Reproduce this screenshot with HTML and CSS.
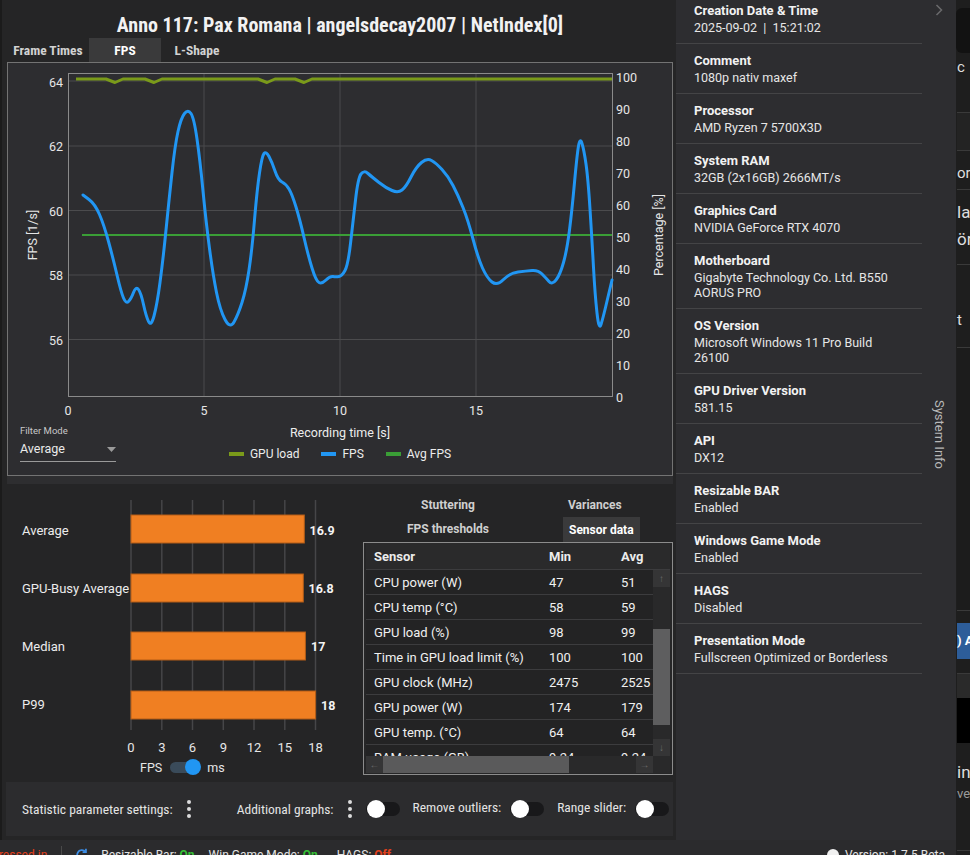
FILE: index.html
```html
<!DOCTYPE html>
<html lang="en">
<head>
<meta charset="utf-8">
<title>CapFrameX - Analysis</title>
<link rel="stylesheet" href="styles.css">
</head>
<body>
<div class="app">
  <main class="main">
    <h1 class="title">Anno 117: Pax Romana | angelsdecay2007 | NetIndex[0]</h1>
    <nav class="tabs">
      <div class="tab tab-first">Frame Times</div>
      <div class="tab tab-active">FPS</div>
      <div class="tab">L-Shape</div>
    </nav>

    <section class="chart-panel">
      <svg class="fps-chart" width="664" height="356" viewBox="8 63 664 356">
        <g class="grid">
          <line x1="204" y1="73" x2="204" y2="396"/>
          <line x1="340" y1="73" x2="340" y2="396"/>
          <line x1="476" y1="73" x2="476" y2="396"/>
          <line x1="68" y1="81" x2="612" y2="81"/>
          <line x1="68" y1="146" x2="612" y2="146"/>
          <line x1="68" y1="210.5" x2="612" y2="210.5"/>
          <line x1="68" y1="275" x2="612" y2="275"/>
          <line x1="68" y1="339.5" x2="612" y2="339.5"/>
        </g>
        <rect class="plot-frame" x="68.5" y="73.5" width="544" height="323"/>
        <g class="ticks ticks-left">
          <text x="63" y="82">64</text>
          <text x="63" y="146">62</text>
          <text x="63" y="211">60</text>
          <text x="63" y="275">58</text>
          <text x="63" y="340">56</text>
        </g>
        <g class="ticks ticks-right">
          <text x="616" y="77">100</text>
          <text x="616" y="109">90</text>
          <text x="616" y="141">80</text>
          <text x="616" y="173">70</text>
          <text x="616" y="205">60</text>
          <text x="616" y="237">50</text>
          <text x="616" y="269">40</text>
          <text x="616" y="301">30</text>
          <text x="616" y="333">20</text>
          <text x="616" y="365">10</text>
          <text x="616" y="397">0</text>
        </g>
        <g class="ticks ticks-bottom">
          <text x="68" y="410">0</text>
          <text x="204" y="410">5</text>
          <text x="340" y="410">10</text>
          <text x="476" y="410">15</text>
        </g>
        <text class="axis-title" transform="translate(32 235) rotate(-90)">FPS [1/s]</text>
        <text class="axis-title" transform="translate(658 235) rotate(-90)">Percentage [%]</text>
        <path class="line-gpu" d="M76 79 H106 L115 82.5 L123 79 H145 L154 82.5 L162 79 H258 L267 82.5 L275 79 H295 L304 82.5 L312 79 H612"/>
        <path class="line-avg" d="M82 235 H612"/>
        <path class="line-fps" d="M83 195 L89 199.5 Q95 204 99.5 214.5 Q104 225 108.5 241.5 Q113 258 117 275 Q121 292 123.5 298 Q126 304 128.5 301.5 Q131 299 133.5 292.5 Q136 286 138.5 289.5 Q141 293 143.5 304.5 Q146 316 148.5 321.5 Q151 327 154 316 Q157 305 160 282.5 Q163 260 166 230 Q169 200 172 172.5 Q175 145 178 131.5 Q181 118 184.5 113.5 Q188 109 191 113.5 Q194 118 197 139 Q200 160 203 191 Q206 222 209.5 248.5 Q213 275 216.5 292.5 Q220 310 225 319.5 Q230 329 234 322 Q238 315 242 302.5 Q246 290 249 270 Q252 250 254.5 220 Q257 190 259.5 173 Q262 156 264 153.5 Q266 151 269 156.5 Q272 162 275 171 Q278 180 282 182 Q286 184 289 189 Q292 194 296 207 Q300 220 304 237.5 Q308 255 312 268 Q316 281 319 282.5 Q322 284 326 280 Q330 276 333 276.5 Q336 277 339 276.5 Q342 276 345 270.5 Q348 265 350.5 243.5 Q353 222 355.5 200 Q358 178 361 174 Q364 170 368 173.5 Q372 177 379 182.5 Q386 188 392 190.5 Q398 193 402 190 Q406 187 411 177 Q416 167 421.5 162.5 Q427 158 431.5 160.5 Q436 163 442 169.5 Q448 176 453 185.5 Q458 195 463 207.5 Q468 220 473 239 Q478 258 482.5 268 Q487 278 492 282 Q497 286 503.5 279.5 Q510 273 518 272 Q526 271 532 270.5 Q538 270 542 274 Q546 278 549 281.5 Q552 285 556 280 Q560 275 563.5 262.5 Q567 250 569.5 230 Q572 210 574.5 182.5 Q577 155 578.5 146 Q580 137 582 143.5 Q584 150 586 164 Q588 178 590 209 Q592 240 593.5 267.5 Q595 295 597 313 Q599 331 601 324.5 Q603 318 605.5 307.5 Q608 297 610 288.5 L612 280"/>
      </svg>
      <div class="chart-foot">
        <div class="filter">
          <div class="filter-label">Filter Mode</div>
          <div class="filter-select">
            <span>Average</span>
            <svg class="dd-arrow" width="9" height="5" viewBox="0 0 9 5"><path d="M0 0H9L4.5 5Z"/></svg>
          </div>
        </div>
        <div class="axis-foot">
          <div class="xtitle">Recording time [s]</div>
          <div class="legend">
            <span class="lg-item"><i class="sw sw-gpu"></i>GPU load</span>
            <span class="lg-item"><i class="sw sw-fps"></i>FPS</span>
            <span class="lg-item"><i class="sw sw-avg"></i>Avg FPS</span>
          </div>
        </div>
      </div>
    </section>

    <div class="splitter"></div>

    <section class="stats">
      <div class="bars">
        <svg class="bar-chart" width="356" height="273" viewBox="7 484 356 273">
          <g class="bar-grid">
            <line x1="131" y1="500" x2="131" y2="730"/>
            <line x1="161.8" y1="500" x2="161.8" y2="730"/>
            <line x1="192.5" y1="500" x2="192.5" y2="730"/>
            <line x1="223.3" y1="500" x2="223.3" y2="730"/>
            <line x1="254" y1="500" x2="254" y2="730"/>
            <line x1="284.8" y1="500" x2="284.8" y2="730"/>
            <line x1="315.5" y1="500" x2="315.5" y2="730"/>
          </g>
          <g class="bar">
            <rect x="131" y="515" width="173.3" height="28"/>
            <rect x="131" y="574" width="172.3" height="28"/>
            <rect x="131" y="632" width="174.4" height="28"/>
            <rect x="131" y="691" width="184.6" height="28"/>
          </g>
          <g class="bar-label">
            <text x="22" y="530">Average</text>
            <text x="22" y="588">GPU-Busy Average</text>
            <text x="22" y="646">Median</text>
            <text x="22" y="704">P99</text>
          </g>
          <g class="bar-value">
            <text x="309.5" y="530">16.9</text>
            <text x="308.5" y="588">16.8</text>
            <text x="311" y="646">17</text>
            <text x="321" y="705">18</text>
          </g>
          <g class="bar-ticks">
            <text x="131" y="747">0</text>
            <text x="161.8" y="747">3</text>
            <text x="192.5" y="747">6</text>
            <text x="223.3" y="747">9</text>
            <text x="254" y="747">12</text>
            <text x="284.8" y="747">15</text>
            <text x="315.5" y="747">18</text>
          </g>
        </svg>
        <div class="unit-toggle">
          <span>FPS</span>
          <span class="switch switch-on"><i class="knob"></i></span>
          <span>ms</span>
        </div>
      </div>

      <div class="sensor">
        <div class="subtabs">
          <div class="subtab">Stuttering</div>
          <div class="subtab subtab-r">Variances</div>
          <div class="subtab">FPS thresholds</div>
          <div class="subtab subtab-r subtab-active">Sensor data</div>
        </div>
        <div class="tbl">
          <div class="thead">
            <span>Sensor</span><span>Min</span><span>Avg</span>
          </div>
          <div class="tbody">
            <div class="tr"><span>CPU power (W)</span><span>47</span><span>51</span></div>
            <div class="tr"><span>CPU temp (°C)</span><span>58</span><span>59</span></div>
            <div class="tr"><span>GPU load (%)</span><span>98</span><span>99</span></div>
            <div class="tr"><span>Time in GPU load limit (%)</span><span>100</span><span>100</span></div>
            <div class="tr"><span>GPU clock (MHz)</span><span>2475</span><span>2525</span></div>
            <div class="tr"><span>GPU power (W)</span><span>174</span><span>179</span></div>
            <div class="tr"><span>GPU temp. (°C)</span><span>64</span><span>64</span></div>
            <div class="tr"><span>RAM usage (GB)</span><span>9.24</span><span>9.24</span></div>
          </div>
          <div class="vscroll">
            <div class="sb-btn">↑</div>
            <div class="sb-thumb-v"></div>
            <div class="sb-btn sb-end">↓</div>
          </div>
          <div class="hscroll">
            <div class="sb-btn">←</div>
            <div class="sb-thumb-h"></div>
            <div class="sb-btn sb-end">→</div>
          </div>
          <div class="sb-corner"></div>
        </div>
      </div>
    </section>

    <div class="settings">
      <span class="set-text">Statistic parameter settings:</span>
      <span class="kebab"><i></i><i></i><i></i></span>
      <span class="set-text set-gap">Additional graphs:</span>
      <span class="kebab"><i></i><i></i><i></i></span>
      <span class="switch switch-off"><i class="knob"></i></span>
      <span class="set-text set-up">Remove outliers:</span>
      <span class="switch switch-off"><i class="knob"></i></span>
      <span class="set-text set-up">Range slider:</span>
      <span class="switch switch-off"><i class="knob"></i></span>
    </div>
  </main>

  <aside class="sysinfo">
    <div class="si-list">
      <div class="si-item"><div class="si-key">Creation Date &amp; Time</div><div class="si-val">2025-09-02&nbsp; |&nbsp; 15:21:02</div></div>
      <div class="si-item"><div class="si-key">Comment</div><div class="si-val">1080p nativ maxef</div></div>
      <div class="si-item"><div class="si-key">Processor</div><div class="si-val">AMD Ryzen 7 5700X3D</div></div>
      <div class="si-item"><div class="si-key">System RAM</div><div class="si-val">32GB (2x16GB) 2666MT/s</div></div>
      <div class="si-item"><div class="si-key">Graphics Card</div><div class="si-val">NVIDIA GeForce RTX 4070</div></div>
      <div class="si-item"><div class="si-key">Motherboard</div><div class="si-val">Gigabyte Technology Co. Ltd. B550<br>AORUS PRO</div></div>
      <div class="si-item"><div class="si-key">OS Version</div><div class="si-val">Microsoft Windows 11 Pro Build<br>26100</div></div>
      <div class="si-item"><div class="si-key">GPU Driver Version</div><div class="si-val">581.15</div></div>
      <div class="si-item"><div class="si-key">API</div><div class="si-val">DX12</div></div>
      <div class="si-item"><div class="si-key">Resizable BAR</div><div class="si-val">Enabled</div></div>
      <div class="si-item"><div class="si-key">Windows Game Mode</div><div class="si-val">Enabled</div></div>
      <div class="si-item"><div class="si-key">HAGS</div><div class="si-val">Disabled</div></div>
      <div class="si-item"><div class="si-key">Presentation Mode</div><div class="si-val">Fullscreen Optimized or Borderless</div></div>
    </div>
    <div class="si-rail">
      <svg class="chev" width="8" height="12" viewBox="0 0 8 12"><path d="M1.5 1 L6.5 6 L1.5 11"/></svg>
      <div class="si-rail-label">System Info</div>
    </div>
  </aside>

  <div class="strip">
    <div class="st st-a"></div>
    <div class="st st-box"></div>
    <div class="st st-c">c</div>
    <div class="st st-d"></div>
    <div class="st st-e">or</div>
    <div class="st st-f">la<br>ör</div>
    <div class="st st-g">t</div>
    <div class="st st-h"></div>
    <div class="st st-i"><div class="st-blue">) A</div></div>
    <div class="st st-j"></div>
    <div class="st st-k"></div>
    <div class="st st-l"><div class="st-big">in</div><div class="st-small">ve</div></div>
    <div class="st st-m"></div>
  </div>

  <footer class="status">
    <span class="st-red st-cut">Compressed in</span>
    <span class="st-sep"></span>
    <svg class="refresh" width="14" height="14" viewBox="0 0 16 16"><path d="M13.5 8a5.5 5.5 0 1 1-1.6-3.9"/><path d="M12.5 0.8v3.8h-3.8"/></svg>
    <span class="st-item">Resizable Bar: <b class="on">On</b></span>
    <span class="st-item">Win Game Mode: <b class="on">On</b></span>
    <span class="st-item st-item-wide">HAGS: <b class="off">Off</b></span>
    <span class="st-version"><i class="info-dot"></i>Version: 1.7.5 Beta</span>
  </footer>
</div>
</body>
</html>
```

FILE: styles.css
```css
* { box-sizing: border-box; margin: 0; padding: 0; }

html, body {
  width: 970px;
  height: 855px;
  overflow: hidden;
  background: #252526;
}

body {
  font-family: Roboto, "Noto Sans", "Liberation Sans", sans-serif;
  color: #e8e8e8;
}

.app {
  display: grid;
  grid-template-columns: 676px 280px 14px;
  grid-template-rows: 840px 15px;
  height: 855px;
}

/* ---------- main column ---------- */
.main {
  grid-column: 1;
  grid-row: 1;
  background: #252526;
  border-left: 2px solid #1b1b1b;
  padding: 0 3px 0 5px;
  display: flex;
  flex-direction: column;
}

.title {
  height: 38px;
  padding-top: 13px;
  text-align: center;
  font-family: "Roboto Condensed", "Liberation Sans Narrow", "DejaVu Sans Condensed", Roboto, sans-serif;
  font-weight: 700;
  font-size: 20px;
  line-height: 24px;
  color: #f2f2f2;
}

.tabs {
  display: flex;
  height: 24px;
}

.tab {
  width: 72px;
  text-align: center;
  line-height: 24px;
  font-family: "Roboto Condensed", "Liberation Sans Narrow", "DejaVu Sans Condensed", Roboto, sans-serif;
  font-weight: 700;
  font-size: 13.5px;
  color: #d2d2d2;
}

.tab-first { width: 82px; }

.tab-active {
  background: #3a3a3b;
  color: #ffffff;
}

/* ---------- FPS chart ---------- */
.chart-panel {
  height: 414px;
  border: 1px solid #737373;
  background: #2d2d30;
  display: flex;
  flex-direction: column;
}

.fps-chart { display: block; }

.grid line { stroke: #4b4b4d; stroke-width: 1; }

.plot-frame { fill: none; stroke: #8a8a8a; stroke-width: 1; }

.ticks text, .axis-title {
  font-family: Roboto, "Noto Sans", sans-serif;
  font-size: 12.5px;
  fill: #e6e6e6;
  dominant-baseline: central;
}

.ticks-left text { text-anchor: end; }
.ticks-right text { text-anchor: start; }
.ticks-bottom text { text-anchor: middle; }
.axis-title { text-anchor: middle; }

.line-gpu { fill: none; stroke: #7a9a1a; stroke-width: 3; stroke-linejoin: round; }
.line-avg { fill: none; stroke: #3a9e36; stroke-width: 2; }
.line-fps { fill: none; stroke: #2196f3; stroke-width: 3; stroke-linejoin: round; stroke-linecap: round; }

.chart-foot {
  flex: 1;
  display: grid;
  grid-template-columns: 1fr auto 1fr;
}

.filter { padding-left: 12px; }

.filter-label {
  margin-top: 6px;
  font-size: 9.5px;
  line-height: 12px;
  color: #c8c8c8;
}

.filter-select {
  margin-top: 3px;
  width: 96px;
  height: 22px;
  border-bottom: 1px solid #9a9a9a;
  display: flex;
  justify-content: space-between;
  align-items: center;
  padding-bottom: 3px;
  font-size: 12.5px;
  line-height: 18px;
  color: #eaeaea;
}

.dd-arrow { fill: #9a9a9a; }

.axis-foot { display: flex; flex-direction: column; align-items: center; }

.xtitle {
  margin-top: 6px;
  font-size: 12.5px;
  line-height: 16px;
  color: #ececec;
}

.legend {
  margin-top: 5px;
  display: flex;
  gap: 22px;
  font-size: 12px;
  line-height: 16px;
  color: #ececec;
}

.lg-item { display: flex; align-items: center; gap: 6px; }

.sw { display: block; width: 15px; height: 4px; }
.sw-gpu { background: #7a9a1a; }
.sw-fps { background: #2196f3; }
.sw-avg { background: #3a9e36; }

.splitter {
  height: 8px;
  background: #2e2e30;
}

/* ---------- statistics ---------- */
.stats {
  height: 298px;
  display: grid;
  grid-template-columns: 356px 310px;
}

.bar-chart { display: block; }

.bar-grid line { stroke: #464648; stroke-width: 1.5; }

.bar rect { fill: #f07f22; stroke: #b35d17; stroke-width: 1; }

.bar-label text {
  font-family: Roboto, sans-serif;
  font-size: 13px;
  fill: #ececec;
  dominant-baseline: central;
}

.bar-value text {
  font-family: Roboto, sans-serif;
  font-weight: 700;
  font-size: 12.5px;
  fill: #f4f4f4;
  dominant-baseline: central;
}

.bar-ticks text {
  font-family: Roboto, sans-serif;
  font-size: 13px;
  fill: #e6e6e6;
  text-anchor: middle;
  dominant-baseline: central;
}

.unit-toggle {
  height: 20px;
  padding-left: 133px;
  display: flex;
  align-items: center;
  gap: 8px;
  font-size: 12.5px;
  color: #e6e6e6;
}

.switch {
  position: relative;
  display: inline-block;
  flex: none;
  border-radius: 8px;
}

.switch-on {
  width: 29px;
  height: 11px;
  background: #3a4b5a;
}

.switch-on .knob {
  position: absolute;
  right: -2px;
  top: -3px;
  width: 16px;
  height: 16px;
  border-radius: 50%;
  background: #2196f3;
}

.switch-off {
  width: 34px;
  height: 14px;
  background: #18181a;
}

.switch-off .knob {
  position: absolute;
  left: 1px;
  top: -2px;
  width: 18px;
  height: 18px;
  border-radius: 50%;
  background: #ffffff;
}

/* ---------- sensor data ---------- */
.sensor {
  padding-top: 10px;
  display: flex;
  flex-direction: column;
}

.subtabs {
  display: grid;
  grid-template-columns: 170px 1fr;
  grid-template-rows: 22px 26px;
}

.subtab {
  text-align: center;
  font-weight: 700;
  font-size: 12px;
  color: #cfcfcf;
  line-height: 22px;
}

.subtabs .subtab:nth-child(n+3) { line-height: 27px; }

.subtab-r {
  justify-self: start;
  margin-left: 30px;
  padding: 0 5px;
}

.subtab-active {
  background: #3a3a3b;
  color: #ffffff;
  padding: 0 6px;
  line-height: 26px !important;
  margin-top: 1px;
}

.tbl {
  height: 233px;
  border: 1px solid #8c8c8c;
  padding: 0 2px 1px 2px;
  display: grid;
  grid-template-columns: 287px 17px;
  grid-template-rows: 27px 186px 17px;
  background: #262627;
}

.thead {
  grid-column: 1 / 3;
  display: grid;
  grid-template-columns: 175px 72px 1fr;
  padding-left: 8px;
  align-items: center;
  border-bottom: 1px solid #3c3c3e;
  font-weight: 700;
  font-size: 13px;
  color: #ececec;
  background: #2a2a2b;
}

.tbody {
  overflow: hidden;
  background: #232324;
}

.tr {
  height: 25px;
  display: grid;
  grid-template-columns: 175px 72px 1fr;
  padding-left: 8px;
  align-items: center;
  border-bottom: 1px solid #3c3c3e;
  font-size: 13px;
  color: #f0f0f0;
  white-space: nowrap;
}

.vscroll {
  display: flex;
  flex-direction: column;
  background: #29292a;
}

.hscroll {
  display: flex;
  background: #29292a;
}

.sb-btn {
  width: 17px;
  height: 17px;
  background: #353536;
  color: #6c6c6c;
  font-size: 10px;
  line-height: 17px;
  text-align: center;
}

.vscroll .sb-end { margin-top: auto; }
.hscroll .sb-end { margin-left: auto; }

.sb-thumb-v {
  margin-top: 42px;
  height: 96px;
  background: #5e5e5f;
}

.sb-thumb-h {
  width: 186px;
  background: #5a5a5b;
}

.sb-corner { background: #29292a; }

/* ---------- settings bar ---------- */
.settings {
  height: 54px;
  margin-left: -1px;
  background: #2c2c2e;
  display: flex;
  align-items: center;
  padding-left: 16px;
  font-family: "Roboto Condensed", "Liberation Sans Narrow", "DejaVu Sans Condensed", Roboto, sans-serif;
  font-size: 13.5px;
  color: #e4e4e4;
}

.set-text { white-space: nowrap; }
.set-up { position: relative; top: -2px; margin-left: 13px; margin-right: 9px; }
.set-gap { margin-left: 32px; }

.kebab {
  display: flex;
  flex-direction: column;
  gap: 3px;
  margin: 0 14px;
}

.kebab i {
  display: block;
  width: 4px;
  height: 4px;
  border-radius: 50%;
  background: #dcdcdc;
}

/* ---------- system info ---------- */
.sysinfo {
  grid-column: 2;
  grid-row: 1;
  background: #2d2d30;
  display: flex;
}

.si-list {
  width: 246px;
  margin-top: -6px;
}

.si-item {
  padding: 9px 0 8px 18px;
  border-bottom: 1px solid #444446;
}

.si-key {
  font-weight: 700;
  font-size: 13px;
  line-height: 16px;
  color: #f2f2f2;
}

.si-val {
  margin-top: 1px;
  font-size: 12.5px;
  line-height: 15px;
  color: #e6e6e6;
}

.si-rail {
  flex: 1;
  display: flex;
  flex-direction: column;
  align-items: center;
}

.chev {
  margin-top: 4px;
  fill: none;
  stroke: #6a6a6c;
  stroke-width: 1.5;
}

.si-rail-label {
  margin-top: 384px;
  writing-mode: vertical-rl;
  font-size: 13px;
  color: #b8b8b8;
}

/* ---------- right strip (window behind) ---------- */
.strip {
  grid-column: 3;
  grid-row: 1 / 3;
  background: #1e1e1e;
  overflow: hidden;
  white-space: nowrap;
  color: #dedede;
  font-size: 15px;
  padding-left: 1px;
}

.st { border-top: 1px solid #3a3a3a; }
.st-a { height: 8px; border-top: 0; }
.st-box { height: 45px; border-top: 0; background: #121212; border-radius: 6px 0 0 6px; margin-left: -1px; }
.st-c { height: 59px; border-top: 0; padding-top: 6px; line-height: 16px; }
.st-d { height: 38px; background: #232323; }
.st-e { height: 39px; padding-top: 14px; line-height: 16px; }
.st-f { height: 75px; padding-top: 9px; line-height: 27px; font-size: 17px; }
.st-g { height: 83px; padding-top: 47px; line-height: 16px; }
.st-h { height: 263px; background: #1c1c1c; }
.st-i { height: 63px; padding-top: 12px; }
.st-blue { height: 36px; background: #2d5d99; color: #fff; font-weight: 700; font-size: 13px; line-height: 36px; }
.st-j { height: 25px; background: #2a2a2a; }
.st-k { height: 45px; background: #000; border-top: 0; }
.st-l { height: 107px; border-top: 0; padding-top: 18px; }
.st-big { font-size: 17px; line-height: 22px; }
.st-small { font-size: 13px; line-height: 22px; color: #9a9a9a; }
.st-m { height: 10px; }

/* ---------- status bar ---------- */
.status {
  grid-column: 1 / 3;
  grid-row: 2;
  background: #2b2b2d;
  display: flex;
  align-items: flex-start;
  padding-top: 6px;
  padding-right: 11px;
  font-size: 12px;
  line-height: 18px;
  color: #e4e4e4;
  white-space: nowrap;
}

.st-red { color: #e2401c; }
.st-cut { margin-left: -33px; }

.st-sep {
  width: 1px;
  height: 20px;
  margin: 0 0 0 14px;
  background: #4a4a4a;
}

.refresh {
  margin: 2px 12px 0 13px;
  fill: none;
  stroke: #3d8ee6;
  stroke-width: 2;
}

.st-item { margin-right: 14px; }
.st-item-wide { margin-left: 5px; }
.on { color: #35c135; font-weight: 700; }
.off { color: #e2401c; font-weight: 700; }

.st-version {
  margin-left: auto;
  display: flex;
  align-items: flex-start;
  gap: 6px;
}

.info-dot {
  display: block;
  width: 12px;
  height: 12px;
  margin-top: 3px;
  border-radius: 50%;
  background: #f0f0f0;
}
```
